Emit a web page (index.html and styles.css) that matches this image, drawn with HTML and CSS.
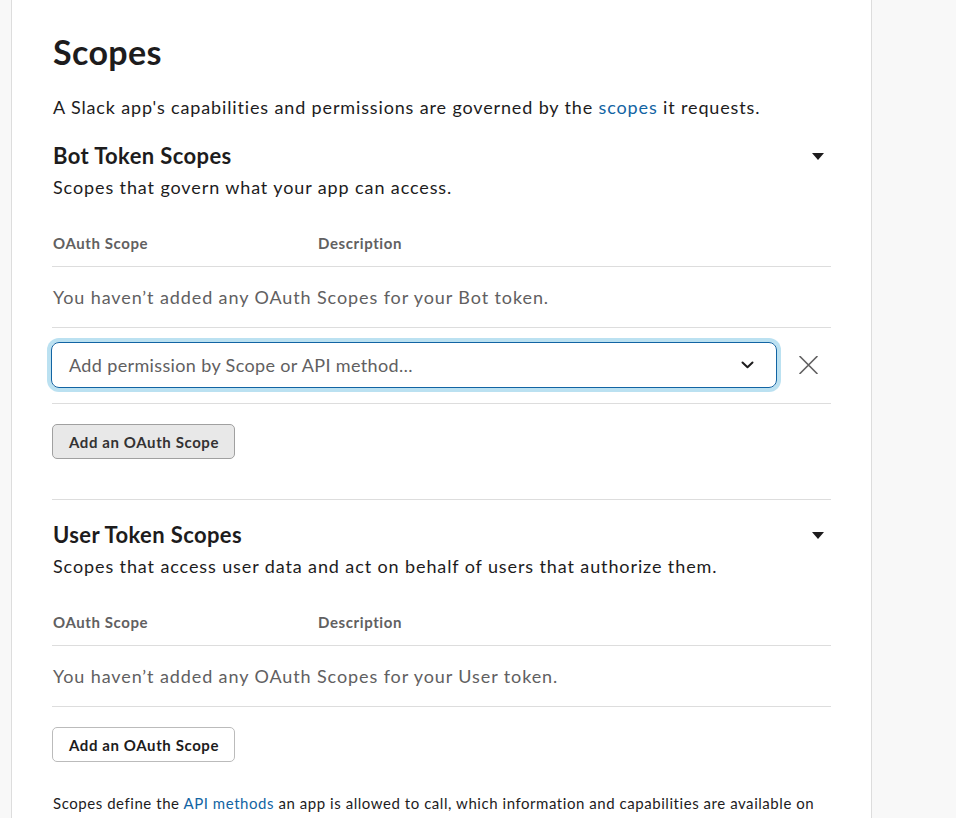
FILE: index.html
```html
<!DOCTYPE html>
<html lang="en">
<head>
<meta charset="utf-8">
<title>Scopes</title>
<link rel="stylesheet" href="styles.css">
</head>
<body>
<div class="page">
  <main class="card">
    <h1 class="title">Scopes</h1>
    <p class="lead">A Slack app's capabilities and permissions are governed by the <a href="#" class="link">scopes</a> it requests.</p>

    <section class="scope-section">
      <div class="section-head">
        <h3 class="section-title">Bot Token Scopes</h3>
        <span class="caret"></span>
      </div>
      <p class="section-sub">Scopes that govern what your app can access.</p>
      <div class="table-head">
        <span class="col-scope">OAuth Scope</span>
        <span class="col-desc">Description</span>
      </div>
      <div class="empty-row">You haven’t added any OAuth Scopes for your Bot token.</div>
      <div class="select-row">
        <div class="select">
          <span class="placeholder">Add permission by Scope or API method…</span>
          <svg class="chevron" width="13" height="8" viewBox="0 0 13 8"><path d="M1.5 1.5 L6.5 6.2 L11.5 1.5" fill="none" stroke="#1d1c1d" stroke-width="2" stroke-linecap="round" stroke-linejoin="round"/></svg>
        </div>
        <div class="close">
          <svg width="19" height="18" viewBox="0 0 19 18"><path d="M1 0.5 L18 17.5 M18 0.5 L1 17.5" stroke="#616061" stroke-width="1.6" stroke-linecap="round"/></svg>
        </div>
      </div>
      <button class="btn btn-disabled">Add an OAuth Scope</button>
    </section>

    <section class="scope-section second">
      <div class="section-head">
        <h3 class="section-title">User Token Scopes</h3>
        <span class="caret"></span>
      </div>
      <p class="section-sub">Scopes that access user data and act on behalf of users that authorize them.</p>
      <div class="table-head">
        <span class="col-scope">OAuth Scope</span>
        <span class="col-desc">Description</span>
      </div>
      <div class="empty-row">You haven’t added any OAuth Scopes for your User token.</div>
      <button class="btn">Add an OAuth Scope</button>
    </section>

    <p class="footnote">Scopes define the <a href="#" class="link">API methods</a> an app is allowed to call, which information and capabilities are available on a workspace it’s installed on.</p>
  </main>
</div>
</body>
</html>
```

FILE: styles.css
```css
* { box-sizing: border-box; }
html, body { margin: 0; padding: 0; }
body {
  background: #f8f8f8;
  font-family: Lato, "Noto Sans", sans-serif;
  color: #1d1c1d;
}
.page {
  padding-left: 11px;
}
.card {
  width: 861px;
  min-height: 900px;
  background: #fff;
  border-left: 1px solid #dddddd;
  border-right: 1px solid #dddddd;
  padding: 30px 40px 40px 40px;
}
.title {
  margin: 0;
  font-size: 34px;
  line-height: 44px;
  font-weight: 700;
  letter-spacing: 0.35px;
  padding-left: 1px;
}
.lead {
  margin: 20px 0 0;
  font-size: 18px;
  line-height: 26px;
  letter-spacing: 0.86px;
  padding-left: 1px;
}
.link {
  color: #1264a3;
  text-decoration: none;
}
.scope-section {
  margin-top: 21px;
}
.scope-section.second {
  margin-top: 40px;
  border-top: 1px solid #dddddd;
  padding-top: 20px;
}
.section-head {
  display: flex;
  align-items: center;
  justify-content: space-between;
  padding-left: 1px;
}
.section-title {
  margin: 0;
  font-size: 22px;
  line-height: 30px;
  font-weight: 700;
  letter-spacing: 0.38px;
}
.caret {
  width: 0;
  height: 0;
  border-left: 6px solid transparent;
  border-right: 6px solid transparent;
  border-top: 7px solid #1d1c1d;
  margin-right: 7px;
}
.section-sub {
  margin: 3px 0 0;
  font-size: 18px;
  line-height: 26px;
  letter-spacing: 0.89px;
  padding-left: 1px;
}
.table-head {
  margin-top: 33px;
  display: flex;
  font-size: 15px;
  line-height: 20px;
  font-weight: 700;
  color: #616061;
  letter-spacing: 0.6px;
  padding: 0 0 13px 1px;
  border-bottom: 1px solid #dddddd;
}
.col-scope { width: 265px; }
.empty-row {
  padding: 18px 0 18px 1px;
  font-size: 18px;
  line-height: 24px;
  color: #616061;
  letter-spacing: 0.9px;
  border-bottom: 1px solid #dddddd;
}
.select-row {
  display: flex;
  align-items: center;
  padding: 14px 0 15px;
  border-bottom: 1px solid #dddddd;
}
.select {
  flex: 1;
  margin-left: -1px;
  height: 46px;
  border: 1px solid #1264a3;
  border-radius: 8px;
  box-shadow: 0 0 0 4px rgba(29, 155, 209, 0.3);
  display: flex;
  align-items: center;
  justify-content: space-between;
  padding: 0 22px 0 17px;
}
.placeholder {
  font-size: 18px;
  color: #616061;
  letter-spacing: 0.36px;
}
.chevron { display: block; }
.close {
  width: 54px;
  display: flex;
  justify-content: flex-end;
  align-items: center;
  padding-right: 13px;
}
.close svg { display: block; }
.btn {
  margin-top: 20px;
  height: 35px;
  padding: 0 15px 0 16px;
  font-family: Lato, "Noto Sans", sans-serif;
  font-size: 15px;
  font-weight: 700;
  color: #1d1c1d;
  letter-spacing: 0.6px;
  background: #fff;
  border: 1px solid #bbbbbb;
  border-radius: 5px;
  display: block;
}
.btn-disabled {
  background: #e8e8e8;
  border-color: #a0a0a0;
  color: #333233;
}
.footnote {
  margin: 30px 0 0;
  font-size: 15px;
  line-height: 22px;
  letter-spacing: 0.55px;
  padding: 0 14px 0 1px;
}
```
